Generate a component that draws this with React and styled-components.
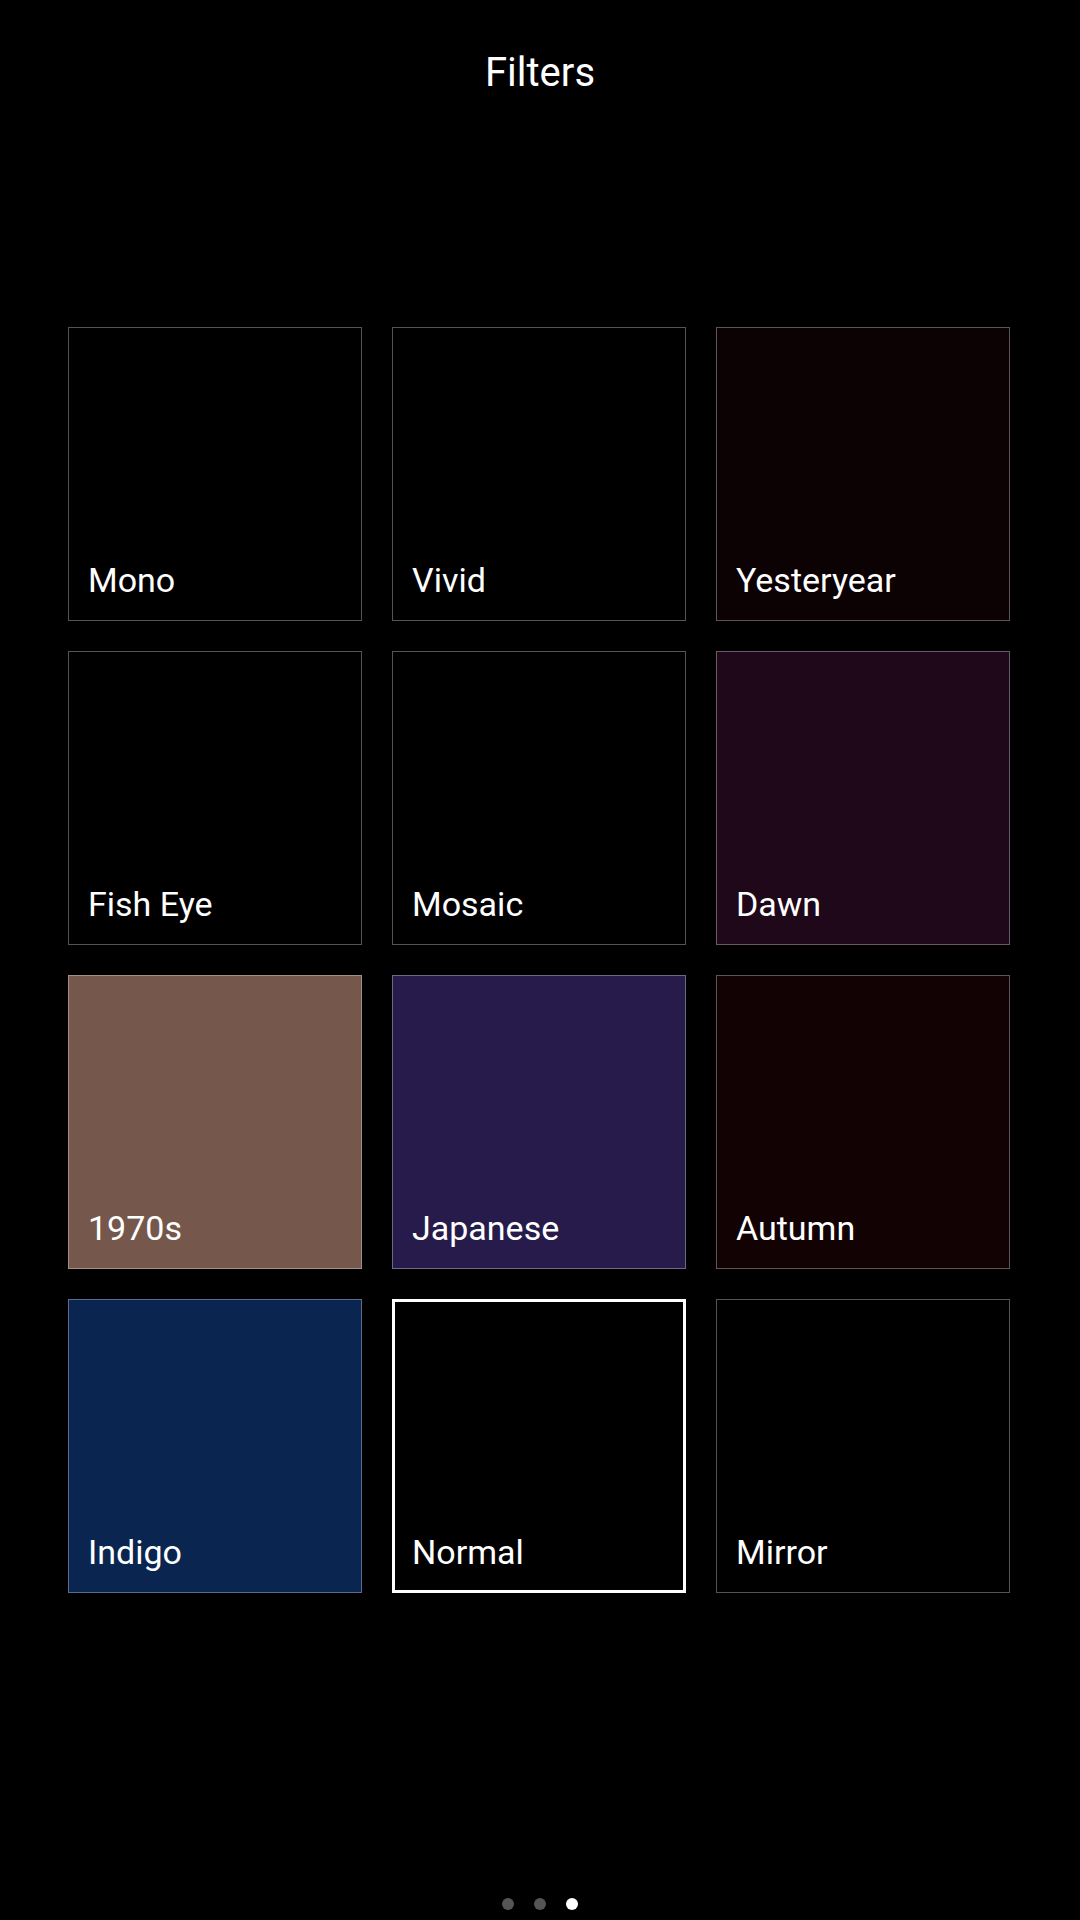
import React from "react";
import styled, { createGlobalStyle } from "styled-components";

const Global = createGlobalStyle`
  html, body { margin: 0; padding: 0; background: #000; }
  body { font-family: Roboto, "Noto Sans", "Liberation Sans", sans-serif; color: #fff; }
`;

const Screen = styled.div`
  min-height: 1920px;
  display: flex;
  flex-direction: column;
  align-items: center;
  background: #000;
  box-sizing: border-box;
`;

const Title = styled.h1`
  margin: 0;
  padding-top: 49px;
  font-size: 40px;
  line-height: 48px;
  font-weight: 400;
  color: #fff;
`;

const Grid = styled.div`
  margin-top: 230px;
  margin-right: 2px;
  display: grid;
  grid-template-columns: repeat(3, 294px);
  grid-auto-rows: 294px;
  gap: 30px;
`;

const Tile = styled.div`
  box-sizing: border-box;
  background: ${(p) => p.$bg};
  border: ${(p) => (p.$selected ? "3px solid #fff" : "1px solid rgba(255,255,255,0.33)")};
  display: flex;
  align-items: flex-end;
  padding: ${(p) => (p.$selected ? "0 0 18px 17px" : "0 0 20px 19px")};
`;

const Label = styled.span`
  font-size: 34px;
  line-height: 40px;
  color: #fff;
`;

const Dots = styled.div`
  margin-top: auto;
  padding-bottom: 10px;
  display: flex;
  gap: 20px;
`;

const Dot = styled.span`
  width: 12px;
  height: 12px;
  border-radius: 50%;
  background: ${(p) => (p.$active ? "#fff" : "#555")};
`;

const filters = [
  { name: "Mono", bg: "#000" },
  { name: "Vivid", bg: "#000" },
  { name: "Yesteryear", bg: "#0c0103" },
  { name: "Fish Eye", bg: "#000" },
  { name: "Mosaic", bg: "#000" },
  { name: "Dawn", bg: "#1e081a" },
  { name: "1970s", bg: "#75584b" },
  { name: "Japanese", bg: "#261b4a" },
  { name: "Autumn", bg: "#130203" },
  { name: "Indigo", bg: "#0a2550" },
  { name: "Normal", bg: "#000", selected: true },
  { name: "Mirror", bg: "#000" },
];

export default function App() {
  return (
    <>
      <Global />
      <Screen>
        <Title>Filters</Title>
        <Grid>
          {filters.map((f) => (
            <Tile key={f.name} $bg={f.bg} $selected={f.selected}>
              <Label>{f.name}</Label>
            </Tile>
          ))}
        </Grid>
        <Dots>
          <Dot />
          <Dot />
          <Dot $active />
        </Dots>
      </Screen>
    </>
  );
}
